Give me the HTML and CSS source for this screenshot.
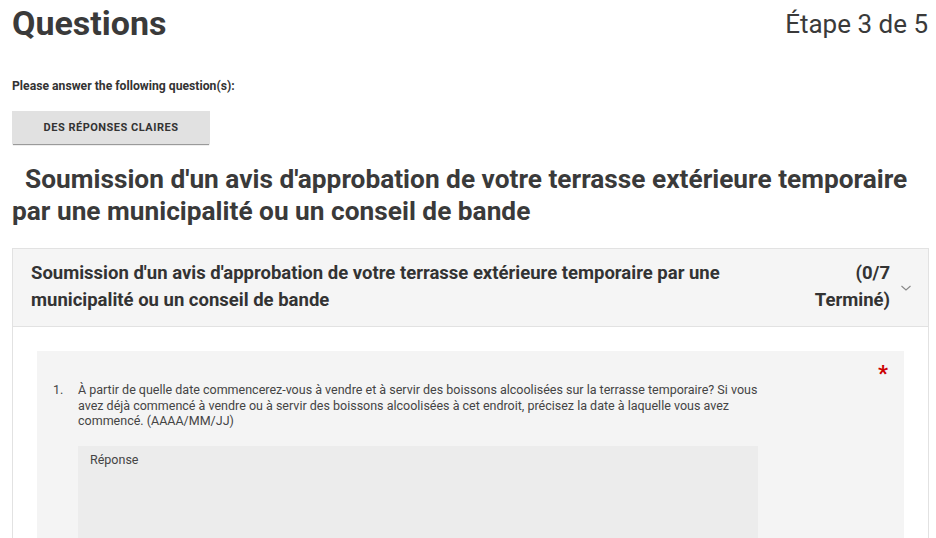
FILE: index.html
```html
<!DOCTYPE html>
<html lang="fr">
<head>
<meta charset="utf-8">
<title>Questions</title>
<link rel="stylesheet" href="styles.css">
</head>
<body>
<div class="page">
  <div class="title-row">
    <h1 class="title">Questions</h1>
    <div class="step">Étape 3 de 5</div>
  </div>
  <p class="intro">Please answer the following question(s):</p>
  <button class="btn" type="button">DES RÉPONSES CLAIRES</button>
  <h2 class="section-title">&nbsp; Soumission d'un avis d'approbation de votre terrasse extérieure temporaire par une municipalité ou un conseil de bande</h2>
  <div class="panel">
    <div class="panel-head">
      <div class="panel-title">Soumission d'un avis d'approbation de votre terrasse extérieure temporaire par une municipalité ou un conseil de bande</div>
      <div class="panel-status">(0/7<br>Terminé)</div>
      <svg class="chev" width="12" height="8" viewBox="0 0 12 8"><path d="M1.5 2 L6 6 L10.5 2" fill="none" stroke="#888" stroke-width="1.1"/></svg>
    </div>
    <div class="panel-body">
      <div class="qcard">
        <span class="req">*</span>
        <div class="q">
          <span class="qnum">1.</span>
          <div class="qmain">
            <div class="qtext">À partir de quelle date commencerez-vous à vendre et à servir des boissons alcoolisées sur la terrasse temporaire? Si vous avez déjà commencé à vendre ou à servir des boissons alcoolisées à cet endroit, précisez la date à laquelle vous avez commencé. (AAAA/MM/JJ)</div>
            <div class="answer"><span class="answer-label">Réponse</span></div>
          </div>
        </div>
      </div>
    </div>
  </div>
</div>
</body>
</html>
```

FILE: styles.css
```css
html, body {
  margin: 0;
  padding: 0;
  background: #fff;
  overflow: hidden;
}
body {
  font-family: Roboto, "Liberation Sans", sans-serif;
  color: #333;
}
.page {
  padding: 0 7px 0 12px;
}
.title-row {
  display: flex;
  justify-content: space-between;
  align-items: flex-start;
}
.title {
  margin: 0;
  font-size: 34px;
  font-weight: 700;
  line-height: 46px;
  color: #3a3a3a;
}
.step {
  font-size: 26px;
  line-height: 48px;
  color: #3a3a3a;
  padding-right: 1px;
}
.intro {
  margin: 28px 0 0;
  font-size: 12.2px;
  font-weight: 700;
  line-height: 20px;
  color: #333;
}
.btn {
  display: block;
  margin-top: 15px;
  width: 198px;
  height: 33px;
  border: 0;
  background: #e1e1e1;
  box-shadow: 0 2px 1px -1px #9a9a9a;
  font-family: Roboto, "Liberation Sans", sans-serif;
  font-size: 11px;
  font-weight: 700;
  letter-spacing: 0.5px;
  color: #333;
  padding: 0;
}
.section-title {
  margin: 19px 0 0;
  font-size: 26.25px;
  font-weight: 700;
  line-height: 32px;
  color: #3a3a3a;
}
.panel {
  margin-top: 21px;
  border: 1px solid #e2e2e2;
}
.panel-head {
  display: flex;
  align-items: flex-start;
  background: #f5f5f5;
  border-bottom: 1px solid #e2e2e2;
  padding: 11px 16px 12px 18px;
}
.panel-title {
  flex: 1;
  font-size: 18.5px;
  font-weight: 700;
  line-height: 27px;
  color: #333;
  padding-right: 40px;
}
.panel-status {
  font-size: 18.5px;
  font-weight: 700;
  line-height: 27px;
  text-align: right;
  color: #333;
}
.chev {
  margin: 24px 0 0 10px;
  flex: none;
}
.panel-body {
  padding: 24px 24px 0;
}
.qcard {
  position: relative;
  background: #f4f4f4;
  padding: 31px 16px 0;
  min-height: 200px;
}
.req {
  position: absolute;
  right: 16px;
  top: 11px;
  color: #c00;
  font-size: 22px;
  font-weight: 700;
  line-height: 24px;
}
.q {
  display: flex;
}
.qnum {
  width: 25px;
  font-size: 12.5px;
  line-height: 15.5px;
  color: #444;
}
.qmain {
  width: 680px;
}
.qtext {
  font-size: 12.5px;
  line-height: 15.5px;
  color: #444;
}
.answer {
  margin-top: 17px;
  background: #ececec;
  height: 120px;
  padding: 3px 12px;
}
.answer-label {
  font-size: 12.5px;
  line-height: 16px;
  color: #444;
}
```
